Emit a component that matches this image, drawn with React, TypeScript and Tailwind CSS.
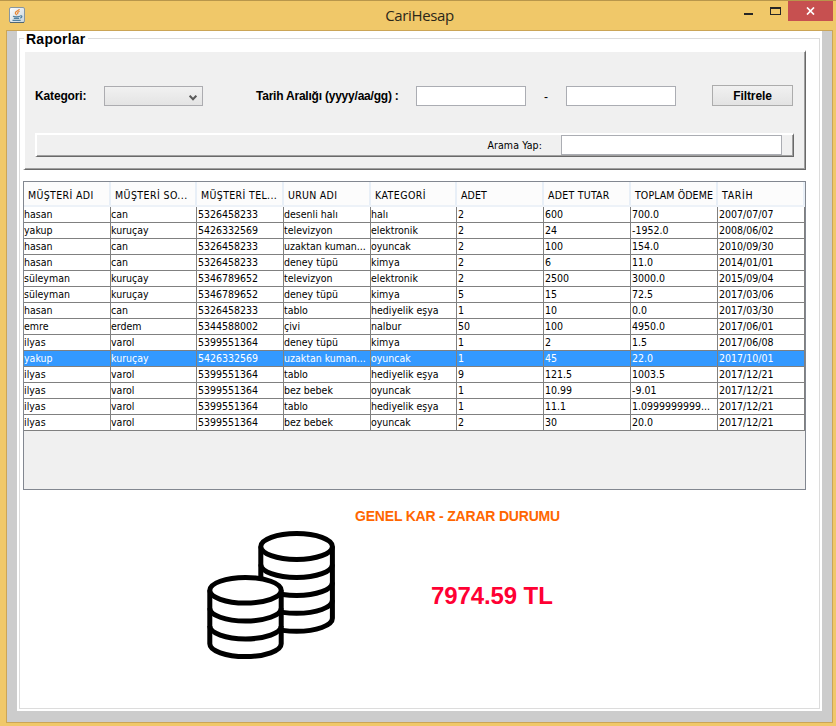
const columns = [
  { title: "MÜŞTERİ ADI", width: "w-[87px]", tracking: "tracking-[0.35px]" },
  { title: "MÜŞTERİ SO...", width: "w-[86px]", tracking: "tracking-[0.42px]" },
  { title: "MÜŞTERİ TEL...", width: "w-[87px]", tracking: "tracking-[0.36px]" },
  { title: "URUN ADI", width: "w-[87px]", tracking: "tracking-[0.28px]" },
  { title: "KATEGORİ", width: "w-[86px]", tracking: "tracking-[0.45px]" },
  { title: "ADET", width: "w-[87px]", tracking: "tracking-[0.1px]" },
  { title: "ADET TUTAR", width: "w-[87px]", tracking: "tracking-[0.25px]" },
  { title: "TOPLAM ÖDEME", width: "w-[87px]", tracking: "tracking-[0.1px]" },
  { title: "TARİH", width: "w-[87px]", tracking: "tracking-[0.7px]" },
];

const rows = [
  ["hasan", "can", "5326458233", "desenli halı", "halı", "2", "600", "700.0", "2007/07/07"],
  ["yakup", "kuruçay", "5426332569", "televizyon", "elektronik", "2", "24", "-1952.0", "2008/06/02"],
  ["hasan", "can", "5326458233", "uzaktan kuman...", "oyuncak", "2", "100", "154.0", "2010/09/30"],
  ["hasan", "can", "5326458233", "deney tüpü", "kimya", "2", "6", "11.0", "2014/01/01"],
  ["süleyman", "kuruçay", "5346789652", "televizyon", "elektronik", "2", "2500", "3000.0", "2015/09/04"],
  ["süleyman", "kuruçay", "5346789652", "deney tüpü", "kimya", "5", "15", "72.5", "2017/03/06"],
  ["hasan", "can", "5326458233", "tablo", "hediyelik eşya", "1", "10", "0.0", "2017/03/30"],
  ["emre", "erdem", "5344588002", "çivi", "nalbur", "50", "100", "4950.0", "2017/06/01"],
  ["ilyas", "varol", "5399551364", "deney tüpü", "kimya", "1", "2", "1.5", "2017/06/08"],
  ["yakup", "kuruçay", "5426332569", "uzaktan kuman...", "oyuncak", "1", "45", "22.0", "2017/10/01"],
  ["ilyas", "varol", "5399551364", "tablo", "hediyelik eşya", "9", "121.5", "1003.5", "2017/12/21"],
  ["ilyas", "varol", "5399551364", "bez bebek", "oyuncak", "1", "10.99", "-9.01", "2017/12/21"],
  ["ilyas", "varol", "5399551364", "tablo", "hediyelik eşya", "1", "11.1", "1.0999999999...", "2017/12/21"],
  ["ilyas", "varol", "5399551364", "bez bebek", "oyuncak", "2", "30", "20.0", "2017/12/21"],
];

const selectedRow = 9;

const isNumeric = (text: string) => /^[-\d]/.test(text);

function JavaIcon() {
  return (
    <svg width="16" height="16" viewBox="0 0 16 16" fill="none">
      <defs>
        <linearGradient id="java-bg" x1="0" y1="0" x2="1" y2="1">
          <stop offset="0" stopColor="#ffffff" />
          <stop offset="1" stopColor="#c6d3dc" />
        </linearGradient>
      </defs>
      <rect x="0.5" y="0.5" width="15" height="15" rx="1.5" fill="url(#java-bg)" stroke="#8796a0" />
      <path d="M1 15.5H15" stroke="#4f6674" />
      <path d="M10.500 2.200C9.800 3.700 6.300 4 6.300 5.900C6.400 6.900 7.500 7.200 7.600 8.300M10.600 4.300C8.700 5 8.200 5.800 8.900 7.200" stroke="#e98531" strokeWidth="1.200" />
      <path d="M4 9.300C5.500 10 9.500 9.900 11 9.300M4.800 11.300H10.200M3.500 13.400H11.700M11.200 8.900C13.300 8.300 13.600 10.200 11.200 11.100" stroke="#5382a1" strokeWidth="1.200" />
    </svg>
  );
}

function TitleBar() {
  return (
    <header className="flex h-[30px] shrink-0 border-t border-[#b8964b]">
      <div className="w-[120px] pt-1.5 pl-[9px]">
        <JavaIcon />
      </div>
      <h1 className="flex-1 pt-[4px] text-center font-['Open_Sans',sans-serif] text-[15px] leading-[21px] tracking-[-0.35px] text-[#2b2719]">
        CariHesap
      </h1>
      <div className="flex w-[117px] items-start justify-end pr-[3px]">
        <div className="mt-[12px] mr-[17px] h-[2px] w-[9px] bg-[#262626]" />
        <div className="mt-[6px] mr-[7px] h-[8px] w-[11px] border border-t-2 border-[#262626]" />
        <div className="flex h-5 w-[45px] items-center justify-center bg-[#c75050]">
          <svg width="9" height="8" viewBox="0 0 9 8">
            <path d="M1 0.500L8 7.500M8 0.500L1 7.500" stroke="#fff" strokeWidth="1.700" />
          </svg>
        </div>
      </div>
    </header>
  );
}

function Filters() {
  return (
    <section className="mt-[4px] ml-[3px] h-[120px] w-[783px] border-t-2 border-r border-b border-l-2 border-t-white border-r-[#696969] border-b-[#696969] border-l-white bg-[#f0f0f0] shadow-[inset_-1px_-1px_0_#a0a0a0]">
      <div className="flex h-[81px] items-start pt-[33px] pl-[10px] text-xs leading-5 font-bold">
        <label className="mt-px w-[69px] tracking-[-0.15px]">Kategori:</label>
        <div className="mt-px flex h-5 w-[99px] items-center justify-end border border-[#acacb0] bg-linear-to-b from-[#f1f1f1] to-[#e4e4e4] pr-[5px]">
          <svg width="8" height="6" viewBox="0 0 8 6" className="mt-[3px]" fill="none">
            <path d="M0.700 0.700L4 4.200L7.300 0.700" stroke="#595959" strokeWidth="2" />
          </svg>
        </div>
        <label className="mt-px ml-[53px] w-[160px] whitespace-nowrap tracking-[-0.22px]">Tarih Aralığı (yyyy/aa/gg) :</label>
        <input className="mt-px h-5 w-[110px] border border-[#abadb3] bg-white outline-none" />
        <span className="mt-[2px] w-10 text-center font-normal">-</span>
        <input className="mt-px h-5 w-[110px] border border-[#abadb3] bg-white outline-none" />
        <button className="ml-9 h-[21px] w-[81px] border border-[#acacac] bg-linear-to-b from-[#f1f1f1] to-[#e3e3e3] pt-px text-center leading-[19px] tracking-[-0.1px]">
          Filtrele
        </button>
      </div>
      <div className="ml-[10px] flex h-6 w-[759px] items-start justify-end border-t-2 border-r border-b border-l-2 border-t-white border-r-[#696969] border-b-[#696969] border-l-white pr-[11px] font-['DejaVu_Sans_Condensed','DejaVu_Sans',sans-serif] text-[10.5px] font-stretch-condensed shadow-[inset_-1px_-1px_0_#a0a0a0]">
        <label className="mr-[19px] leading-5 tracking-[0.12px]">Arama Yap:</label>
        <input className="h-5 w-[221px] border border-[#abadb3] bg-white outline-none" />
      </div>
    </section>
  );
}

function ReportTable() {
  return (
    <section className="mt-[11px] ml-[3px] h-[309px] w-[783px] border border-[#828790] bg-[#f0f0f0] font-['DejaVu_Sans_Condensed','DejaVu_Sans',sans-serif] text-[10.5px] font-stretch-condensed">
      <div className="flex h-[25px] border-b-2 border-[#edf2f8] bg-[#fcfcfc]">
        {columns.map((column) => (
          <div key={column.title} className={`${column.width} ${column.tracking} shrink-0 overflow-hidden border-r-2 border-[#e8eff7] pl-[4px] leading-[26px] whitespace-nowrap`}>
            {column.title}
          </div>
        ))}
      </div>
      {rows.map((row, rowIndex) => (
        <div key={rowIndex} className={rowIndex === selectedRow ? "flex h-4 bg-[#3399ff] text-white" : "flex h-4 bg-white"}>
          {row.map((cell, index) => (
            <div key={index} className={`${columns[index].width} ${isNumeric(cell) ? "pl-px" : "pl-0"} shrink-0 overflow-hidden border-r border-b border-[#808080] leading-[15px] whitespace-nowrap`}>
              {cell}
            </div>
          ))}
        </div>
      ))}
    </section>
  );
}

function Coins() {
  return (
    <svg width="128" height="129" viewBox="207 530.5 128 129" fill="white" stroke="black" strokeWidth="5">
      <path d="M260.800 546V617.800A35.800 13 0 0 0 332.400 617.800V546" />
      <ellipse cx="296.600" cy="546" rx="35.800" ry="13" />
      <path fill="none" d="M260.800 564A35.800 13 0 0 0 332.400 564M260.800 582A35.800 13 0 0 0 332.400 582M260.800 599.800A35.800 13 0 0 0 332.400 599.800" />
      <path d="M209.800 589.800V643.300A35.700 12.800 0 0 0 281.200 643.300V589.800" />
      <ellipse cx="245.500" cy="589.800" rx="35.700" ry="12.800" />
      <path fill="none" d="M209.800 607.700A35.700 12.800 0 0 0 281.200 607.700M209.800 625.600A35.700 12.800 0 0 0 281.200 625.600" />
    </svg>
  );
}

export default function App() {
  return (
    <div className="flex h-[726px] w-[836px] flex-col bg-[#f0c869] font-['Liberation_Sans',Arial,sans-serif] text-black">
      <TitleBar />
      <main className="ml-[6px] h-[693px] w-[827px] border border-[#cba557] bg-[#cccccc] px-[10px] pb-[11px]">
        <div className="h-[680px] bg-white px-[2px]">
          <fieldset className="h-[678px] w-[801px] border border-[#dcdcdc]">
            <legend className="ml-[4px] h-[15px] pr-[2px] pl-[2px] text-[14px] leading-[16px] font-bold tracking-[0.25px]">Raporlar</legend>
            <Filters />
            <ReportTable />
            <div className="flex pl-[187px] font-bold">
              <div className="pt-[41px]">
                <Coins />
              </div>
              <div className="ml-[20px] w-[206px] whitespace-nowrap">
                <h2 className="mt-[16px] text-[14px] leading-5 tracking-[-0.2px] text-[#ff6600]">GENEL KAR - ZARAR DURUMU</h2>
                <p className="mt-[55px] ml-[76px] text-[24px] leading-[30px] tracking-[-0.1px] text-[#ff0033]">7974.59 TL</p>
              </div>
            </div>
          </fieldset>
        </div>
      </main>
    </div>
  );
}
